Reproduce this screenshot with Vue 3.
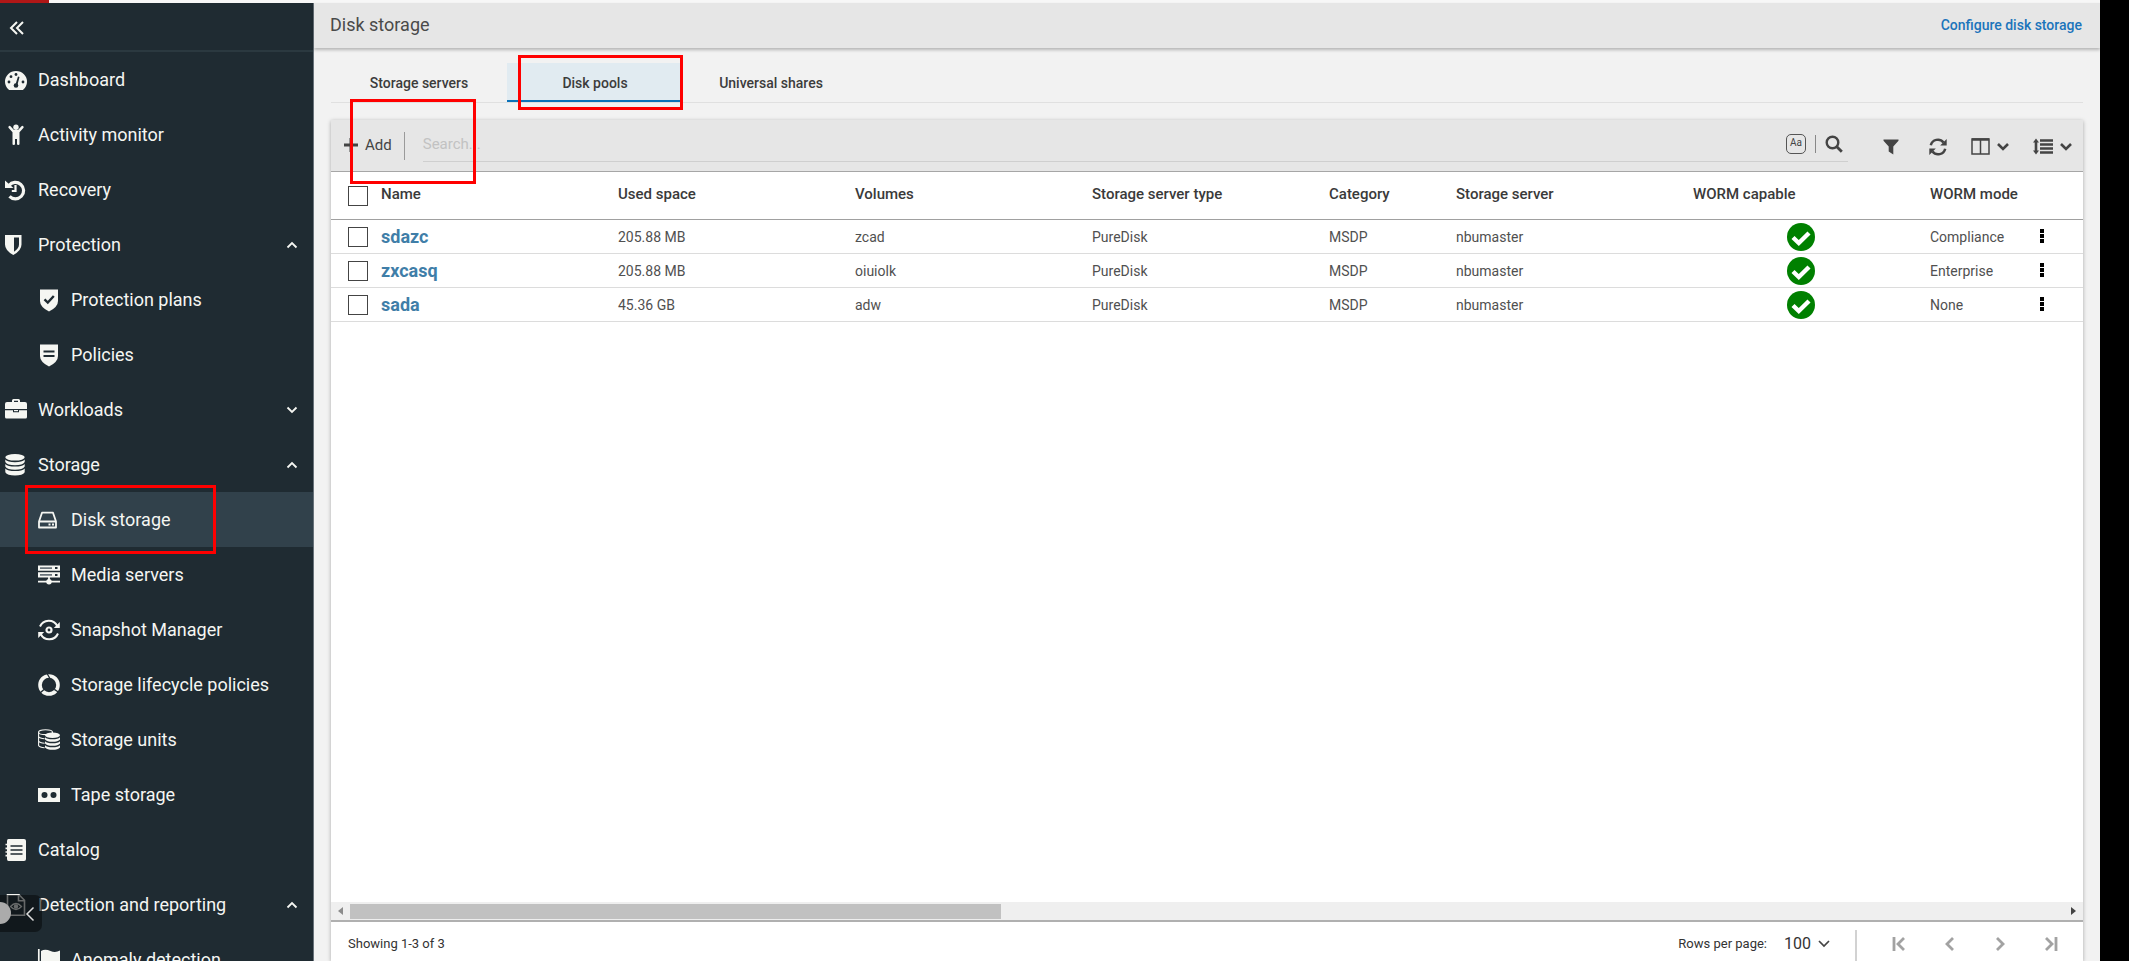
<script setup>
import { ref } from 'vue'

const nav = [
  { id: 'dashboard', label: 'Dashboard' },
  { id: 'activity', label: 'Activity monitor' },
  { id: 'recovery', label: 'Recovery' },
  { id: 'protection', label: 'Protection', open: true },
  { id: 'plans', label: 'Protection plans', sub: true },
  { id: 'policies', label: 'Policies', sub: true },
  { id: 'workloads', label: 'Workloads', open: false },
  { id: 'storage', label: 'Storage', open: true },
  { id: 'disk', label: 'Disk storage', sub: true, active: true },
  { id: 'media', label: 'Media servers', sub: true },
  { id: 'snapshot', label: 'Snapshot Manager', sub: true },
  { id: 'lifecycle', label: 'Storage lifecycle policies', sub: true },
  { id: 'units', label: 'Storage units', sub: true },
  { id: 'tape', label: 'Tape storage', sub: true },
  { id: 'catalog', label: 'Catalog' },
  { id: 'detection', label: 'Detection and reporting', open: true },
  { id: 'anomaly', label: 'Anomaly detection', sub: true }
]

const icons = {
  dashboard: `<path d="M3.6 20.5A11 10.6 0 1 1 18.4 20.5Q18 21 17.4 21H4.600Q4 21 3.600 20.500Z"/><g fill="#1f2b32"><circle cx="4" cy="13" r="1.400"/><circle cx="6" cy="7.700" r="1.400"/><circle cx="11" cy="5.500" r="1.400"/><circle cx="18" cy="13" r="1.400"/><circle cx="11" cy="16.500" r="2.300"/><path d="M10.300 16L13 7.500l1.500.5-2.200 8.500z"/></g>`,
  activity: `<circle cx="11" cy="3.200" r="2.700"/><path d="M3.700 2.200Q4.600 1.300 5.500 2.200L9 6h4l3.500-3.800q.9-.9 1.800 0t0 1.900L14.500 8.300V20q0 1-1.200 1t-1.300-1v-5h-2v5q0 1-1.300 1T7.500 20V8.300L3.700 4.100q-.8-1 0-1.900z"/>`,
  recovery: `<path d="M4 6.500A8.200 8.200 0 1 1 4.500 17.300" fill="none" stroke="currentColor" stroke-width="3.200"/><path d="M0 1.500L8.500 9H0z"/><path d="M10.500 6v6H6.800" fill="none" stroke="currentColor" stroke-width="2.200"/>`,
  protection: `<path fill-rule="evenodd" d="M0 1h16.500v9.500q0 6-8.200 10.500Q0 16.500 0 10.500zM9 3.500v14.300q5-3.300 5-7.300v-7z"/>`,
  plans: `<path d="M2 .5h18V12q0 6-9 10.500Q2 18 2 12z"/><path d="M6.500 10.300l3.300 3.200 6-6.500" fill="none" stroke="#1f2b32" stroke-width="2.400"/>`,
  policies: `<path d="M2 .5h18V12q0 6-9 10.500Q2 18 2 12z"/><path d="M5.500 7.500h11M5.500 12h11" stroke="#1f2b32" stroke-width="2.200"/>`,
  workloads: `<path fill-rule="evenodd" d="M7 3V1.500Q7 0 8.500 0h5Q15 0 15 1.500V3h5q2 0 2 2v5H0V5q0-2 2-2zM9 3h4V1.700H9z"/><path d="M0 11.200h8v2h6v-2h8V18q0 1.500-1.500 1.500h-19Q0 19.500 0 18z"/><path d="M9 11h4v1.200H9z"/>`,
  storage: `<ellipse cx="10" cy="3.300" rx="9.700" ry="3.300"/><path d="M.3 5.600q2.500 2.600 9.700 2.600t9.700-2.600v2.500q-2 3.200-9.700 3.200T.3 8.100zM.3 10q2.500 2.600 9.700 2.600t9.700-2.600v2.500q-2 3.200-9.700 3.200T.3 12.500zM.3 14.400q2.500 2.600 9.700 2.600t9.700-2.600v3.800q-2 3.200-9.700 3.200T.3 18.200z"/>`,
  disk: `<path d="M1 12.500L4 3.700h11l3 8.800v6H1z" fill="none" stroke="currentColor" stroke-width="1.800" stroke-linejoin="round"/><path d="M1 12.500h17M10.500 15.500h2M14 15.500h2" stroke="currentColor" stroke-width="2"/>`,
  media: `<path d="M0 1.500h22v5.300H0zM0 8.300h22v5.300H0z"/><path d="M2 4.100h12M2 10.900h12" stroke="#69737a" stroke-width="1.800"/><path d="M17 4.100h2.500M17 10.900h2.500" stroke="#1f2b32" stroke-width="2"/><path d="M0 17.700h22M11 13v5" stroke="currentColor" stroke-width="1.800"/><circle cx="11" cy="17.800" r="2.700"/>`,
  snapshot: `<g fill="none" stroke="currentColor" stroke-width="2"><path d="M2 7.500A9.500 9.500 0 0 1 19.300 7M20 14.500A9.500 9.500 0 0 1 2.700 15"/></g><path d="M21.800 3v6h-6zM.2 19v-6h6z"/><circle cx="11" cy="11" r="2.500" fill="none" stroke="currentColor" stroke-width="2.200"/>`,
  lifecycle: `<circle cx="11" cy="11" r="9" fill="none" stroke="currentColor" stroke-width="3.600"/><path d="M9.300 0l2.700 4.500M2 19l4-3.600M20.300 18l-4-2.600" stroke="#1f2b32" stroke-width="1.300"/>`,
  units: `<g fill="none" stroke="currentColor" stroke-width="1.100"><ellipse cx="7.500" cy="3.200" rx="7" ry="2.400"/><path d="M.6 3v13.500q1 2 6 2.200M.6 7.500q1 2 6 2.200M.6 12q1 2 6 2.200M14.500 3.200v1"/></g><ellipse cx="14.500" cy="6.200" rx="7.500" ry="2.800"/><path d="M7 8.200q2 2 7.500 2t7.500-2v2.200q-2 2.400-7.500 2.400T7 10.400zM7 12.200q2 2 7.500 2t7.500-2v2.200q-2 2.400-7.500 2.400T7 14.400zM7 16.200q2 2 7.500 2t7.500-2v2.200q-2 2.400-7.500 2.400T7 18.400z"/>`,
  tape: `<path d="M0 4h22v14H0z"/><g fill="#1f2b32"><circle cx="6.500" cy="11" r="3"/><circle cx="15.500" cy="11" r="3"/></g>`,
  catalog: `<path d="M3.500 0H19q2 0 2 2v18q0 2-2 2H3.500Q2 22 2 20V2q0-2 1.500-2z"/><path d="M.5 5.500h3M.5 9.300h3M.5 13h3M.5 16.700h3" stroke="currentColor" stroke-width="1.700"/><path d="M5.500 7h12M5.500 11h12M5.500 15h12" stroke="#1f2b32" stroke-width="1.300"/>`,
  detection: `<path d="M2.500.8H14l5.500 5.500v15h-17zM13.500.8v6h6" fill="none" stroke="currentColor" stroke-width="1.600"/><path d="M5.500 12.500q5.500-6 11 0-5.500 6-11 0z" fill="none" stroke="currentColor" stroke-width="1.300"/><circle cx="11" cy="12.500" r="2.200"/>`,
  anomaly: `<path d="M.8 0v22" stroke="currentColor" stroke-width="1.700"/><path d="M3 2q4-2.500 9.500 0 5 2 9.500-.5V16q-5 2.500-10 .5-4.500-2-9 .5z"/>`
}

const tabs = ['Storage servers', 'Disk pools', 'Universal shares']
const activeTab = ref('Disk pools')

const columns = ['Name', 'Used space', 'Volumes', 'Storage server type', 'Category', 'Storage server', 'WORM capable', 'WORM mode']
const rows = [
  { name: 'sdazc', used: '205.88 MB', volumes: 'zcad', mode: 'Compliance' },
  { name: 'zxcasq', used: '205.88 MB', volumes: 'oiuiolk', mode: 'Enterprise' },
  { name: 'sada', used: '45.36 GB', volumes: 'adw', mode: 'None' }
]

const search = ref('')
const pageSize = ref('100')
const pagers = [
  { label: 'First page', d: 'M3 1v14M13 2L7 8l6 6' },
  { label: 'Previous page', d: 'M11 2L5 8l6 6' },
  { label: 'Next page', d: 'M4 2l6 6-6 6' },
  { label: 'Last page', d: 'M2 2l6 6-6 6M12 1v14' }
]
</script>

<template>
  <div class="page">
    <div class="progress"><div class="progress-bar"></div></div>
    <div class="shell">
      <aside class="sidebar">
        <button class="collapse" aria-label="Collapse menu">
          <svg width="16" height="16" viewBox="0 0 16 16"><path d="M8 2L2 8l6 6M14 2L8 8l6 6" /></svg>
        </button>
        <nav>
          <a
            v-for="item in nav"
            :key="item.id"
            href="#"
            class="nav-item"
            :class="{ sub: item.sub, active: item.active }"
          >
            <svg class="nav-icon" width="22" height="22" viewBox="0 0 22 22" overflow="visible" v-html="icons[item.id]"></svg>
            <span class="nav-label">{{ item.label }}</span>
            <svg v-if="item.open !== undefined" class="nav-chevron" width="12" height="8" viewBox="0 0 12 8">
              <path :d="item.open ? 'M1.500 6.500L6 2l4.500 4.500' : 'M1.500 1.500L6 6l4.500-4.500'" />
            </svg>
          </a>
        </nav>
        <button class="drawer" aria-label="Open side drawer">
          <span class="drawer-dot"></span>
          <svg width="10" height="16" viewBox="0 0 10 16"><path d="M8.500 1.500L2 8l6.500 6.500" /></svg>
        </button>
      </aside>

      <main class="main">
        <header class="top">
          <h1>Disk storage</h1>
          <a href="#">Configure disk storage</a>
        </header>

        <div class="content">
          <div class="tabs" role="tablist">
            <button
              v-for="tab in tabs"
              :key="tab"
              role="tab"
              :aria-selected="tab === activeTab"
              :class="{ active: tab === activeTab }"
              @click="activeTab = tab"
            >{{ tab }}</button>
          </div>

          <section class="panel">
            <div class="toolbar">
              <button class="add">
                <svg width="14" height="14" viewBox="0 0 14 14"><path d="M7 0v14M0 7h14" stroke="currentColor" stroke-width="3" /></svg>
                Add
              </button>
              <span class="bar"></span>
              <div class="search">
                <input v-model="search" type="text" placeholder="Search..." aria-label="Search disk pools" />
                <button class="case" aria-label="Match case">Aa</button>
                <span class="small-bar"></span>
                <button aria-label="Search">
                  <svg width="18" height="18" viewBox="0 0 18 18" fill="none" stroke="currentColor"><circle cx="7.500" cy="7.500" r="5.800" stroke-width="2.400" /><path d="M11.800 11.800l5 5" stroke-width="2.800" /></svg>
                </button>
              </div>
              <div class="tools">
                <button aria-label="Filter">
                  <svg width="16" height="16" viewBox="0 0 16 16"><path d="M.5.5h15v1.300L10.300 7.500V15.500L5.700 12.500v-5L.5 1.800z" fill="currentColor" /></svg>
                </button>
                <button aria-label="Refresh">
                  <svg width="18" height="18" viewBox="0 0 18 18"><g fill="none" stroke="currentColor" stroke-width="2.500"><path d="M1.800 7.300A7.200 7.200 0 0 1 14.500 4.500M16.200 10.700A7.200 7.200 0 0 1 3.500 13.500" /></g><path d="M17.700 1v6.500h-6.500zM.3 17v-6.500h6.500z" fill="currentColor" /></svg>
                </button>
                <button aria-label="Columns">
                  <svg width="19" height="17" viewBox="0 0 19 17" fill="none" stroke="currentColor" stroke-width="1.500"><path d="M1 1h17v15H1zM9.500 1v15" /><path d="M1 1.500h17" stroke-width="2.500" /></svg>
                  <svg width="12" height="8" viewBox="0 0 12 8"><path d="M1 1l5 5 5-5" fill="none" stroke="currentColor" stroke-width="2.600" /></svg>
                </button>
                <button aria-label="Row height">
                  <svg width="20" height="17" viewBox="0 0 20 17"><path d="M3 3v11M7 2.500h13M7 6.500h13M7 10.500h13M7 14.500h13" stroke="currentColor" stroke-width="2.600" /><path d="M0 4.500L3 .5l3 4zM0 12.500l3 4 3-4z" fill="currentColor" /></svg>
                  <svg width="12" height="8" viewBox="0 0 12 8"><path d="M1 1l5 5 5-5" fill="none" stroke="currentColor" stroke-width="2.600" /></svg>
                </button>
              </div>
            </div>

            <div class="table-area">
              <table>
                <colgroup>
                  <col class="c-check" /><col class="c-wide" /><col class="c-wide" /><col class="c-wide" /><col class="c-wide" />
                  <col class="c-category" /><col class="c-wide" /><col class="c-wide" /><col class="c-mode" /><col />
                </colgroup>
                <thead>
                  <tr>
                    <th class="check"><input type="checkbox" aria-label="Select all disk pools" /></th>
                    <th v-for="column in columns" :key="column" scope="col">{{ column }}</th>
                    <th></th>
                  </tr>
                </thead>
                <tbody>
                  <tr v-for="row in rows" :key="row.name">
                    <td class="check"><input type="checkbox" :aria-label="'Select ' + row.name" /></td>
                    <td><a href="#">{{ row.name }}</a></td>
                    <td>{{ row.used }}</td>
                    <td>{{ row.volumes }}</td>
                    <td>PureDisk</td>
                    <td>MSDP</td>
                    <td>nbumaster</td>
                    <td class="worm">
                      <svg width="28" height="28" viewBox="0 0 28 28" role="img" aria-label="Yes"><circle cx="14" cy="14" r="14" fill="#008000" /><path d="M6 14.500l5.800 5.500L22 10" fill="none" stroke="#fff" stroke-width="4.400" /></svg>
                    </td>
                    <td>{{ row.mode }}</td>
                    <td class="actions">
                      <button :aria-label="'Actions for ' + row.name">
                        <svg width="4" height="14" viewBox="0 0 4 14"><path d="M0 0h4v4H0zM0 5h4v4H0zM0 10h4v4H0z" /></svg>
                      </button>
                    </td>
                  </tr>
                </tbody>
              </table>
            </div>

            <div class="scrollbar">
              <svg width="5" height="8" viewBox="0 0 5 8"><path d="M5 0v8L0 4z" fill="#8c8c8c" /></svg>
              <div class="track"><div class="thumb"></div></div>
              <svg width="5" height="8" viewBox="0 0 5 8"><path d="M0 0v8l5-4z" fill="#444" /></svg>
            </div>

            <footer class="foot">
              <span class="count">Showing 1-3 of 3</span>
              <label for="page-size">Rows per page:</label>
              <span class="size">
                <select id="page-size" v-model="pageSize">
                  <option>100</option>
                  <option>50</option>
                </select>
                <svg width="12" height="8" viewBox="0 0 12 8"><path d="M1 1l5 5 5-5" /></svg>
              </span>
              <span class="foot-bar"></span>
              <button v-for="pager in pagers" :key="pager.label" :aria-label="pager.label">
                <svg width="16" height="16" viewBox="0 0 16 16"><path :d="pager.d" /></svg>
              </button>
            </footer>
          </section>
        </div>
      </main>
      <div class="edge"></div>
    </div>

    <div class="mark mark-tab"></div>
    <div class="mark mark-add"></div>
    <div class="mark mark-nav"></div>
  </div>
</template>

<style>
body {
  margin: 0;
}
</style>

<style scoped>
.page {
  position: relative;
  display: flex;
  flex-direction: column;
  height: 100vh;
  overflow: hidden;
  background: #f2f2f2;
  color: #333;
  font-family: Roboto, sans-serif;
  font-size: 14px;
}
.page *,
.page {
  box-sizing: border-box;
}
button {
  display: flex;
  align-items: center;
  padding: 0;
  border: 0;
  background: none;
  color: inherit;
  font: inherit;
}
a {
  text-decoration: none;
}
svg {
  flex: none;
}
.progress {
  flex: none;
  height: 3px;
  background: #f7f7f7;
}
.progress-bar {
  width: 49px;
  height: 3px;
  background: #b01717;
}
.shell {
  display: flex;
  flex: 1;
  min-height: 0;
}
.sidebar {
  position: relative;
  flex: none;
  width: 314px;
  overflow: hidden;
  border-right: 1px solid #68727a;
  background: #1f2b32;
  color: #f5f6f2;
  font-size: 18px;
}
.collapse {
  width: 100%;
  height: 49px;
  padding: 2px 0 0 9px;
  border-bottom: 2px solid #2b3940;
}
.collapse path {
  fill: none;
  stroke: currentColor;
  stroke-width: 2;
}
.nav-item {
  display: flex;
  align-items: center;
  height: 55px;
  padding: 0 15px 0 5px;
  color: inherit;
}
.nav-item.sub {
  padding-left: 38px;
}
.nav-item.active {
  background: #31414b;
}
.nav-icon {
  margin-right: 11px;
  fill: currentColor;
}
.nav-label {
  flex: 1;
}
.nav-chevron path {
  fill: none;
  stroke: currentColor;
  stroke-width: 1.800;
}
.drawer {
  position: absolute;
  left: 0;
  bottom: 29px;
  justify-content: flex-end;
  width: 42px;
  height: 37px;
  padding-right: 7px;
  overflow: hidden;
  border-radius: 0 7px 7px 0;
  background: rgba(8, 11, 13, 0.6);
  color: #dcdcdc;
}
.drawer path {
  fill: none;
  stroke: currentColor;
  stroke-width: 1.500;
}
.drawer-dot {
  position: absolute;
  left: -11px;
  top: 7px;
  width: 22px;
  height: 22px;
  border-radius: 50%;
  background: #ababab;
}
.main {
  display: flex;
  flex: 1;
  flex-direction: column;
  min-width: 0;
}
.top {
  z-index: 1;
  display: flex;
  flex: none;
  align-items: center;
  justify-content: space-between;
  height: 45px;
  padding: 0 18px 2px 16px;
  background: #e6e6e6;
  box-shadow: 0 2px 3px rgba(0, 0, 0, 0.25);
}
.top h1 {
  margin: 0;
  color: #4a4a4a;
  font-size: 18px;
  font-weight: 400;
}
.top a {
  color: #1b74bb;
  font-size: 14px;
  font-weight: 500;
}
.content {
  display: flex;
  flex: 1;
  flex-direction: column;
  min-height: 0;
  padding: 15px 17px 0 17px;
}
.tabs {
  display: flex;
  flex: none;
  height: 40px;
  margin-bottom: 17px;
  border-bottom: 1px solid #e0e0e0;
}
.tabs button {
  justify-content: center;
  width: 176px;
  padding-top: 2px;
  border-bottom: 2px solid transparent;
  color: #3c3c3c;
  font-size: 14px;
  font-weight: 500;
}
.tabs button.active {
  border-color: #0b72b9;
  background: #e1ebf1;
}
.panel {
  display: flex;
  flex: 1;
  flex-direction: column;
  min-height: 0;
  background: #fff;
  box-shadow: 0 1px 4px rgba(0, 0, 0, 0.3);
}
.toolbar {
  display: flex;
  flex: none;
  align-items: center;
  height: 52px;
  padding: 0 11px 0 13px;
  border-bottom: 1px solid #a6a6a6;
  background: #e6e6e6;
  color: #444;
}
.add {
  gap: 7px;
  padding-bottom: 2px;
  font-size: 15px;
}
.bar {
  width: 1px;
  height: 28px;
  margin: 0 18px 0 12px;
  background: #9a9a9a;
}
.search {
  display: flex;
  flex: 1;
  align-items: center;
  height: 32px;
  padding: 0 5px 2px 0;
  border-bottom: 1px solid #cfcfcf;
}
.search input {
  flex: 1;
  min-width: 0;
  padding: 0;
  border: 0;
  outline: 0;
  background: none;
  font: inherit;
  font-size: 15px;
}
.search input::placeholder {
  color: #c2c2c2;
}
.case {
  align-items: flex-start;
  justify-content: center;
  width: 20px;
  height: 20px;
  padding-top: 2px;
  border: 1px solid #555;
  border-radius: 5px;
  font-size: 10px;
  line-height: 12px;
}
.small-bar {
  width: 1px;
  height: 18px;
  margin: 0 9px;
  background: #888;
}
.tools {
  display: flex;
  gap: 24px;
  margin-left: 35px;
  padding-top: 2px;
}
.tools button {
  gap: 7px;
}
.tools button:nth-child(2) {
  margin-left: 6px;
}
.table-area {
  flex: 1;
  min-height: 0;
  overflow: hidden;
}
table {
  width: 100%;
  border-collapse: separate;
  border-spacing: 0;
  table-layout: fixed;
}
.c-check {
  width: 39px;
}
.c-wide {
  width: 237px;
}
.c-category {
  width: 127px;
}
.c-mode {
  width: 106px;
}
th,
td {
  padding: 0 11px;
  text-align: left;
  white-space: nowrap;
}
th {
  height: 48px;
  padding-bottom: 4px;
  border-bottom: 1px solid #a0a0a0;
  color: #3a3a3a;
  font-size: 15px;
  font-weight: 500;
}
td {
  height: 34px;
  border-bottom: 1px solid #dcdcdc;
  color: #505050;
  font-size: 14px;
}
.check {
  padding: 0 0 0 17px;
}
.check input {
  display: block;
  width: 20px;
  height: 20px;
  margin: 0;
  border: 1px solid #444;
  background: #fff;
  appearance: none;
}
td a {
  color: #3f7ea8;
  font-size: 18px;
  font-weight: 700;
}
.worm svg {
  display: block;
  margin: 0 auto;
}
.actions {
  padding: 0 0 2px 15px;
}
.actions button {
  color: #111;
}
.scrollbar {
  display: flex;
  flex: none;
  gap: 7px;
  align-items: center;
  height: 20px;
  padding: 0 7px;
  border-bottom: 2px solid #b0b0b0;
  background: #efefef;
}
.track {
  flex: 1;
}
.thumb {
  width: 38%;
  height: 15px;
  background: #c1c1c1;
}
.foot {
  display: flex;
  flex: none;
  align-items: center;
  height: 39px;
  padding: 4px 6px 0 17px;
  font-size: 13px;
}
.count {
  flex: 1;
}
.size {
  display: flex;
  align-items: center;
  margin-left: 17px;
}
.size select {
  width: 34px;
  padding: 0;
  border: 0;
  background: none;
  color: inherit;
  font: inherit;
  font-size: 16px;
  appearance: none;
}
.size path {
  fill: none;
  stroke: #444;
  stroke-width: 1.700;
}
.foot-bar {
  align-self: stretch;
  width: 2px;
  margin: 4px 16px 0 25px;
  background: #d2d2d2;
}
.foot button {
  justify-content: center;
  width: 51px;
}
.foot button path {
  fill: none;
  stroke: #a2a2a2;
  stroke-width: 2.800;
}
.edge {
  flex: none;
  width: 29px;
  margin-top: -3px;
  background: #000;
}
.mark {
  position: absolute;
  border: 3px solid #f00;
  pointer-events: none;
  z-index: 2;
}
.mark-tab {
  left: 518px;
  top: 55px;
  width: 165px;
  height: 55px;
}
.mark-add {
  left: 350px;
  top: 99px;
  width: 126px;
  height: 85px;
}
.mark-nav {
  left: 25px;
  top: 485px;
  width: 191px;
  height: 69px;
}
</style>
